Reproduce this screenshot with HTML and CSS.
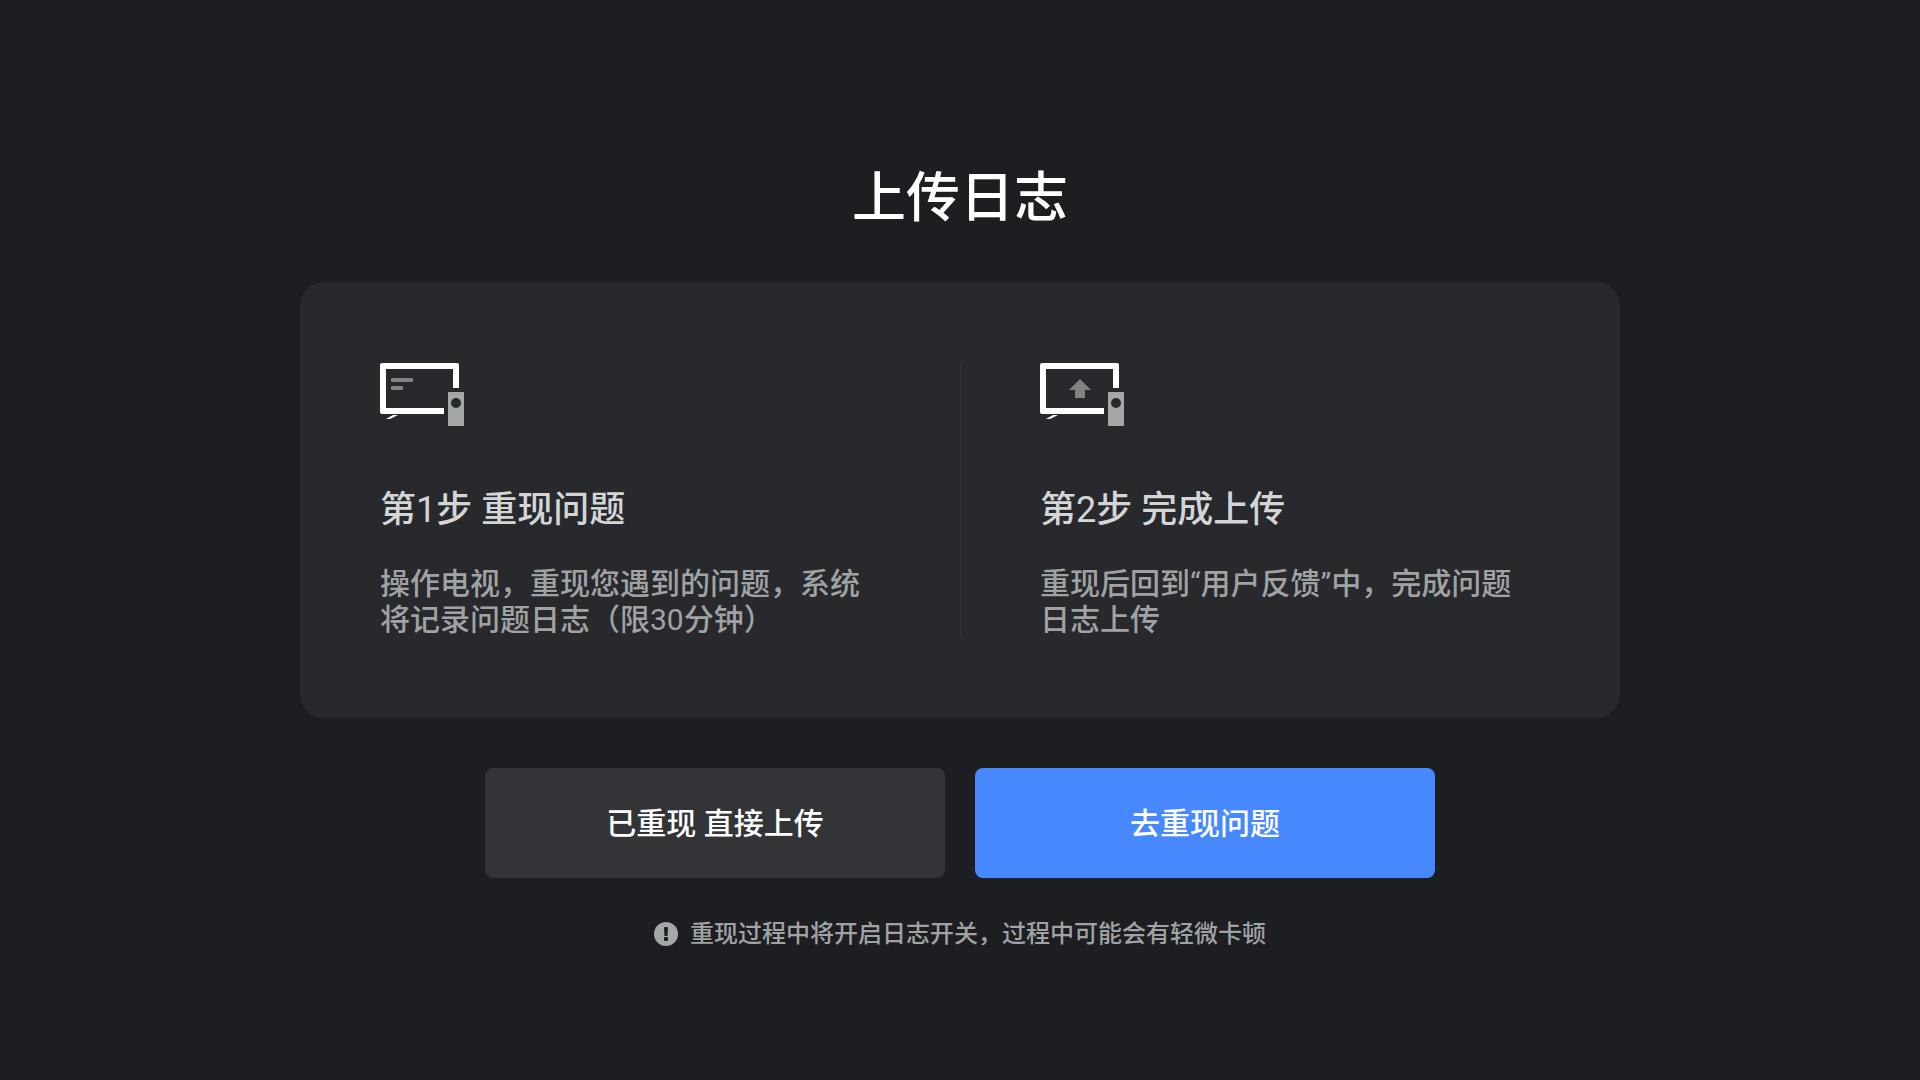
FILE: index.html
```
<!DOCTYPE html>
<html lang="zh-CN">
<head>
  <meta charset="UTF-8">
  <meta name="viewport" content="width=device-width, initial-scale=1.0">
  <title>上传日志</title>
  <link rel="stylesheet" href="styles.css">
</head>
<body>
  <main class="page">
    <h1 class="page-title">上传日志</h1>

    <!-- Steps -->
    <div class="card">
      <section class="step">
        <svg class="step-icon" viewBox="0 -1 84 64" aria-hidden="true">
          <path fill="#fff" d="M2 0H77a2 2 0 0 1 2 2V25H73V6H6V45H64V51H2a2 2 0 0 1-2-2V2a2 2 0 0 1 2-2z"/>
          <path fill="#fff" d="M6 56L13 52H18L10 56z"/>
          <rect fill="#808284" x="11" y="15" width="22" height="4" rx="1"/>
          <rect fill="#808284" x="11" y="23" width="12" height="4" rx="1"/>
          <path fill="#a5a8a9" d="M68 29H84V63H68z"/>
          <circle fill="#27292d" cx="76" cy="40" r="5"/>
        </svg>
        <h2 class="step-title">第<span class="latin">1</span>步 重现问题</h2>
        <p class="step-text">操作电视，重现您遇到的问题，系统将记录问题日志（限<span class="latin">30</span>分钟）</p>
      </section>
      <section class="step">
        <svg class="step-icon" viewBox="0 -1 84 64" aria-hidden="true">
          <path fill="#fff" d="M2 0H77a2 2 0 0 1 2 2V25H73V6H6V45H64V51H2a2 2 0 0 1-2-2V2a2 2 0 0 1 2-2z"/>
          <path fill="#fff" d="M6 56L13 52H18L10 56z"/>
          <path fill="#808284" d="M40 16L51 27H45V35H35V27H29z"/>
          <path fill="#a5a8a9" d="M68 29H84V63H68z"/>
          <circle fill="#27292d" cx="76" cy="40" r="5"/>
        </svg>
        <h2 class="step-title">第<span class="latin">2</span>步 完成上传</h2>
        <p class="step-text">重现后回到<span class="latin">“</span>用户反馈<span class="latin">”</span>中，完成问题日志上传</p>
      </section>
    </div>

    <!-- Actions -->
    <div class="actions">
      <button class="btn" type="button">已重现 直接上传</button>
      <button class="btn btn-primary" type="button">去重现问题</button>
    </div>

    <p class="note">
      <svg class="note-icon" viewBox="0 0 24 24" aria-hidden="true">
        <circle fill="#a5a8a9" cx="12" cy="12" r="12"/>
        <path fill="#1c1e22" d="M10 6a1 1 0 0 1 1-1h2a1 1 0 0 1 1 1L13.5 14h-3z"/>
        <rect fill="#1c1e22" x="10" y="15" width="4" height="4" rx="1"/>
      </svg>
      重现过程中将开启日志开关，过程中可能会有轻微卡顿
    </p>
  </main>
</body>
</html>
```

FILE: styles.css
```
* {
  box-sizing: border-box;
}

body {
  margin: 0;
  background-color: #1c1e22;
  color: #fff;
  font-family: Roboto, "Noto Sans CJK SC", sans-serif;
  font-weight: 500;
}

h1, h2, p {
  margin: 0;
  font-weight: 500;
}

.page {
  display: flex;
  flex-direction: column;
  align-items: center;
  min-height: 100vh;
  padding: 163px 24px 24px;
}

.page-title {
  font-size: 54px;
  line-height: 72px;
  margin-bottom: 47px;
}

.card {
  display: grid;
  grid-template-columns: 1fr 1fr;
  width: 100%;
  max-width: 1320px;
  padding: 80px 0;
  border-radius: 24px;
  background-color: #27292d;
}

.step {
  padding: 0 80px;
}

.step + .step {
  border-left: 1px solid #303236;
  padding-left: 79px;
}

.step-icon {
  display: block;
  width: 84px;
  height: 64px;
}

.step-title {
  margin: 62px 0 34px;
  color: #d4d5d7;
  font-size: 36px;
  line-height: 44px;
}

.step-text {
  color: #a0a2a4;
  font-size: 30px;
  line-height: 36px;
}

.latin {
  font-weight: 400;
}

.actions {
  display: flex;
  justify-content: center;
  gap: 30px;
  width: 100%;
  margin-top: 50px;
}

.btn {
  width: 460px;
  height: 110px;
  padding: 0 0 4px;
  border: none;
  border-radius: 8px;
  background-color: #333437;
  color: #fff;
  font: inherit;
  font-size: 30px;
  cursor: pointer;
}

.btn-primary {
  background-color: #4788ff;
}

.note {
  display: flex;
  align-items: center;
  gap: 12px;
  margin-top: 38px;
  color: #a0a2a4;
  font-size: 24px;
  line-height: 36px;
}

.note-icon {
  width: 24px;
  height: 24px;
}
```
